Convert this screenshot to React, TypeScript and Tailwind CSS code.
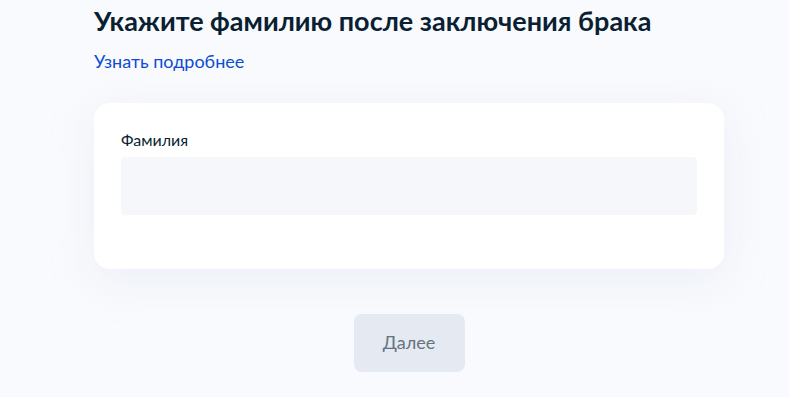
import React from 'react';

const App: React.FC = () => {
  return (
    <div className="min-h-[397px] w-full bg-[#f9fafd] font-['Lato','Noto_Sans',sans-serif] text-[#0b1f33]">
      <div className="ml-[94px] w-[630px] pt-[3px]">
        <h1 className="text-[27px] leading-[36px] font-bold">Укажите фамилию после заключения брака</h1>
        <a href="#" className="mt-[10px] block text-[18px] leading-[24px] text-[#0d4cd3]">Узнать подробнее</a>

        <div className="mt-[30px] rounded-[16px] bg-white px-[27px] pt-[27px] pb-[54px] shadow-[0_10px_40px_rgba(230,235,245,0.7)]">
          <label className="block text-[16px] leading-[20px] text-[#0b1f33]">Фамилия</label>
          <div className="mt-[7px] h-[58px] w-full rounded-[4px] bg-[#f5f7fa]"></div>
        </div>

        <div className="mt-[45px] flex justify-center">
          <button className="flex h-[58px] w-[111px] items-center justify-center rounded-[8px] bg-[#e4e9f2] pb-[3px] text-[18px] leading-[24px] text-[#66727f]">
            Далее
          </button>
        </div>
      </div>
    </div>
  );
};

export default App;
